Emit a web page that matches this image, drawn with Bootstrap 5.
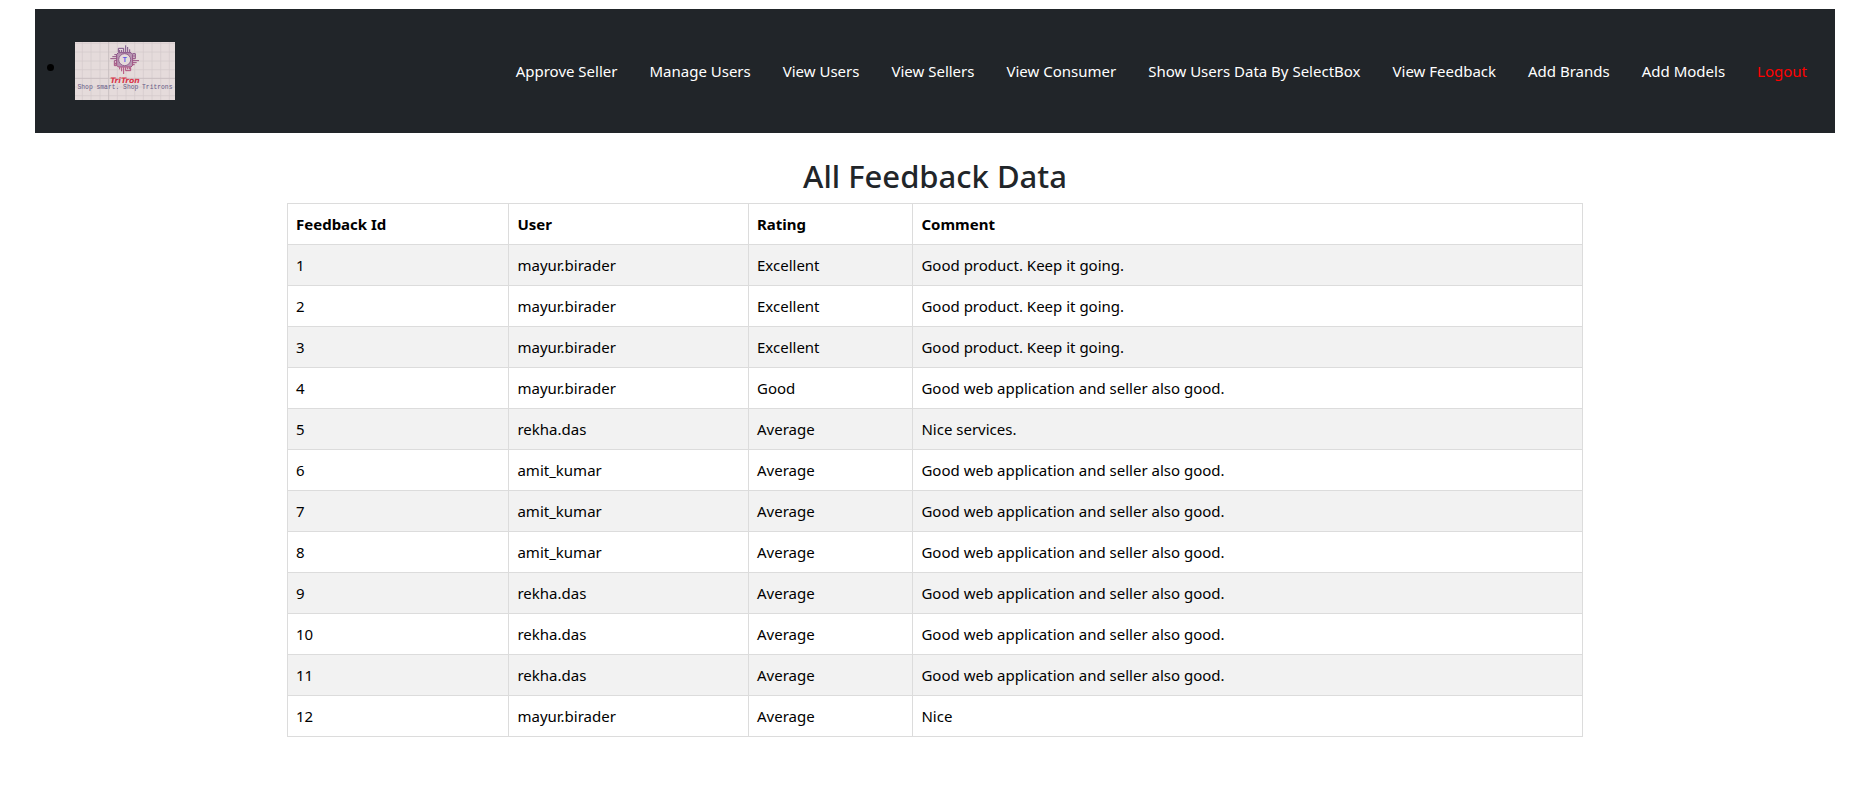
<!DOCTYPE html>
<html lang="en">
<head>
<meta charset="utf-8">
<meta name="viewport" content="width=device-width, initial-scale=1">
<title>All Feedback Data</title>
<link href="https://cdn.jsdelivr.net/npm/bootstrap@5.3.0/dist/css/bootstrap.min.css" rel="stylesheet">
<style>
  body { font-family: "Noto Sans", "Open Sans", sans-serif; font-size: 15px; line-height: 24px; padding-left: 2px; }
  .site-nav { margin: 9px 33px 0; padding: 32px 20px 32px 33px; min-height: 124px; }
  .brand-item { display: list-item; color: #000; padding-left: 7px; }
  .brand-item::marker { font-size: 20px; }
  .brand-logo { width: 100px; height: 58px; vertical-align: middle; }
  .menu { gap: 16px; }
  .menu .nav-link { color: #fff; }
  .menu .logout { color: #f00; }
  .page-title { font-size: 31px; line-height: 38px; font-weight: 500; }
  .feedback { --bs-table-color: #000; --bs-table-striped-color: #000; --bs-table-border-color: #dcdcdc; border-color: #dcdcdc; color: #000; }
  .col-id { width: 17.1%; }
  .col-user { width: 18.5%; }
  .col-rating { width: 12.7%; }
</style>
</head>
<body>
<nav class="site-nav navbar navbar-expand-lg bg-dark">
  <ul class="mb-0 p-0">
    <li class="brand-item">
      <a href="#" aria-label="TriTron"><svg class="brand-logo" viewBox="0 0 300 174">
          <rect width="300" height="174" fill="#e5dbdb"/>
          <path d="M22 0V174M48 0V174M75 0V174M127 0V174M153 0V174M179 0V174M205 0V174M231 0V174M257 0V174M283 0V174M0 4H300M0 30H300M0 57H300M0 83H300M0 135H300M0 161H300" stroke="#d3c9ca" stroke-width="2"/>
          <path d="M101 0V174M0 109H300" stroke="#c9bfc1" stroke-width="3"/>
          <defs>
            <linearGradient id="chip" x1="0" y1="10" x2="0" y2="96" gradientUnits="userSpaceOnUse">
              <stop offset="0" stop-color="#72508a"/><stop offset="1" stop-color="#b84a78"/>
            </linearGradient>
          </defs>
          <g fill="none" stroke="url(#chip)" stroke-width="3">
            <path d="M130 32H168L173 37V70L168 75H130L125 70V37Z" fill="#b795b2"/>
            <path d="M152 30V10M158 30V15M164 30V22M146 30V19H130V30M140 30V24M134 30V24"/>
            <path d="M146 76V96M140 76V88M134 76V82M152 76V86H167V76M158 76V82M163 76V82"/>
            <path d="M125 50H106M125 44H112M125 38H118M125 56H118V71H125M122 62V68"/>
            <path d="M173 56H192M173 62H185M173 68H179M173 50H181V35H173M177 38V46"/>
          </g>
          <circle cx="149" cy="53" r="18" fill="#e5dbdb" stroke="#93618f" stroke-width="3"/>
          <text x="149" y="60" text-anchor="middle" font-family="Liberation Sans, sans-serif" font-size="20" font-weight="700" fill="#5b58e8">T</text>
          <text x="150" y="124" text-anchor="middle" font-family="DejaVu Sans, sans-serif" font-size="23" font-weight="700" font-style="italic" fill="#d9364b">TriTron</text>
          <text x="150" y="140" text-anchor="middle" font-family="Liberation Mono, monospace" font-size="19" fill="#665a86">Shop smart. Shop Tritrons</text>
        </svg></a>
    </li>
  </ul>
  <ul class="menu navbar-nav ms-auto">
    <li class="nav-item"><a class="nav-link" href="#">Approve Seller</a></li>
    <li class="nav-item"><a class="nav-link" href="#">Manage Users</a></li>
    <li class="nav-item"><a class="nav-link" href="#">View Users</a></li>
    <li class="nav-item"><a class="nav-link" href="#">View Sellers</a></li>
    <li class="nav-item"><a class="nav-link" href="#">View Consumer</a></li>
    <li class="nav-item"><a class="nav-link" href="#">Show Users Data By SelectBox</a></li>
    <li class="nav-item"><a class="nav-link" href="#">View Feedback</a></li>
    <li class="nav-item"><a class="nav-link" href="#">Add Brands</a></li>
    <li class="nav-item"><a class="nav-link" href="#">Add Models</a></li>
    <li class="nav-item"><a class="nav-link logout" href="#">Logout</a></li>
  </ul>
</nav>
<main class="container mt-4">
  <h2 class="page-title text-center mb-2">All Feedback Data</h2>
  <table class="feedback table table-bordered table-striped">
    <colgroup><col class="col-id"><col class="col-user"><col class="col-rating"><col></colgroup>
    <thead>
      <tr><th scope="col">Feedback Id</th><th scope="col">User</th><th scope="col">Rating</th><th scope="col">Comment</th></tr>
    </thead>
    <tbody>
      <tr><td>1</td><td>mayur.birader</td><td>Excellent</td><td>Good product. Keep it going.</td></tr>
      <tr><td>2</td><td>mayur.birader</td><td>Excellent</td><td>Good product. Keep it going.</td></tr>
      <tr><td>3</td><td>mayur.birader</td><td>Excellent</td><td>Good product. Keep it going.</td></tr>
      <tr><td>4</td><td>mayur.birader</td><td>Good</td><td>Good web application and seller also good.</td></tr>
      <tr><td>5</td><td>rekha.das</td><td>Average</td><td>Nice services.</td></tr>
      <tr><td>6</td><td>amit_kumar</td><td>Average</td><td>Good web application and seller also good.</td></tr>
      <tr><td>7</td><td>amit_kumar</td><td>Average</td><td>Good web application and seller also good.</td></tr>
      <tr><td>8</td><td>amit_kumar</td><td>Average</td><td>Good web application and seller also good.</td></tr>
      <tr><td>9</td><td>rekha.das</td><td>Average</td><td>Good web application and seller also good.</td></tr>
      <tr><td>10</td><td>rekha.das</td><td>Average</td><td>Good web application and seller also good.</td></tr>
      <tr><td>11</td><td>rekha.das</td><td>Average</td><td>Good web application and seller also good.</td></tr>
      <tr><td>12</td><td>mayur.birader</td><td>Average</td><td>Nice</td></tr>
    </tbody>
  </table>
</main>
<script src="https://cdn.jsdelivr.net/npm/bootstrap@5.3.0/dist/js/bootstrap.bundle.min.js"></script>
</body>
</html>
